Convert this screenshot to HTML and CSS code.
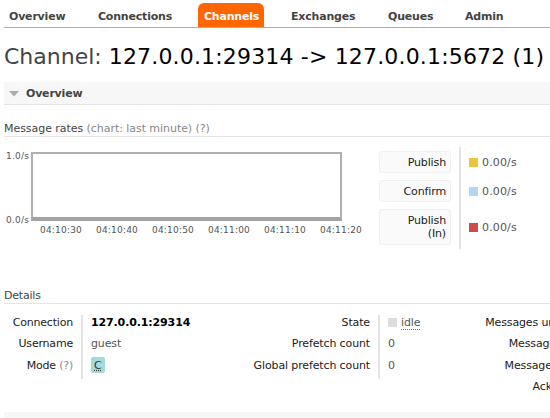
FILE: index.html
```
<!DOCTYPE html>
<html lang="en">
<head>
<meta charset="utf-8">
<title>Channel</title>
<link rel="stylesheet" href="styles.css">
</head>
<body>
<nav class="tabs">
  <a class="tab t1">Overview</a><a class="tab t2">Connections</a><a class="tab t3 selected">Channels</a><a class="tab t4">Exchanges</a><a class="tab t5">Queues</a><a class="tab t6">Admin</a>
</nav>
<main>
  <h1>Channel: <b>127.0.0.1:29314 -&gt; 127.0.0.1:5672 (1)</b></h1>
  <h2><svg width="10" height="6" viewBox="0 0 10 6"><path d="M0 0h10L5 5.5z" fill="#aaa"/></svg><span>Overview</span></h2>
  <h3 class="rates-title"><span>Message rates <i>(chart: last minute) (?)</i></span></h3>
  <section class="rates">
    <div class="chart">
      <div class="ylabels"><span>1.0/s</span><span>0.0/s</span></div>
      <div class="plot"></div>
      <div class="xlabels"><span>04:10:30</span><span>04:10:40</span><span>04:10:50</span><span>04:11:00</span><span>04:11:10</span><span>04:11:20</span></div>
    </div>
    <div class="legend">
      <div class="buttons"><div class="btn">Publish</div><div class="btn">Confirm</div><div class="btn tall">Publish<br>(In)</div></div>
      <div class="values">
        <div class="val"><span class="sw yellow"></span>0.00/s</div>
        <div class="val"><span class="sw blue"></span>0.00/s</div>
        <div class="val tall"><span class="sw red"></span>0.00/s</div>
      </div>
    </div>
  </section>
  <h3 class="details-title"><span>Details</span></h3>
  <section class="details">
    <div class="keys k1"><div>Connection</div><div>Username</div><div>Mode <i>(?)</i></div></div>
    <div class="facts f1"><div><b>127.0.0.1:29314</b></div><div>guest</div><div><abbr class="mode">C</abbr></div></div>
    <div class="keys k2"><div>State</div><div>Prefetch count</div><div>Global prefetch count</div></div>
    <div class="facts f2"><div><span class="sw grey"></span><abbr>idle</abbr></div><div>0</div><div>0</div></div>
    <div class="keys k3"><div>Messages unacknowledged</div><div>Messages unconfirmed</div><div>Messages uncommitted</div><div>Acks uncommitted</div></div>
  </section>
  <div class="next"></div>
</main>
</body>
</html>
```
FILE: styles.css
```
* { box-sizing: border-box; }
html, body { margin: 0; height: 418px; overflow: hidden; background: #fff; }
body { font: 11px/14px "DejaVu Sans", Verdana, sans-serif; color: #484848; padding-left: 4px; letter-spacing: -0.13px; }
i { font-style: normal; color: #888; }
.tabs { display: flex; height: 28px; padding-top: 3px; border-bottom: 1px solid #ffa030; font-weight: bold; white-space: nowrap; font-size: 11px; letter-spacing: -0.2px; }
.tab { height: 24px; line-height: 27px; padding-left: 5px; color: #444; }
.t1 { width: 89px; }
.t2 { width: 96px; margin-right: 9px; }
.t3 { width: 66px; padding-left: 6px; }
.t4 { width: 97px; margin-left: 22px; }
.t5 { width: 77px; }
.selected { background: #f60; color: #fff; border-radius: 6px 6px 0 0; }
main { display: block; }
h1 { margin: 0; height: 54px; font-size: 22px; line-height: 57px; font-weight: normal; color: #444; white-space: nowrap; letter-spacing: 0; }
h1 b { font-weight: normal; color: #000; letter-spacing: 0.17px; }
h2 { margin: 0; height: 23px; padding: 0 0 0 5px; display: flex; align-items: center; background: #f7f7f7; border-bottom: 1px solid #e4e4e4; font-size: 11px; letter-spacing: -0.2px; color: #444; }
h2 svg { margin-top: 1px; }
h2 span { margin-left: 7px; line-height: 16px; padding-top: 1px; }
h3 { margin: 0; font-size: 11px; font-weight: normal; line-height: 15px; border-bottom: 1px solid #e6e6e6; white-space: nowrap; color: #444; letter-spacing: -0.05px; }
.rates-title { height: 16px; margin-top: 16px; }
.rates { display: flex; height: 151px; }
.chart { display: grid; grid-template-columns: 27px 337px; grid-template-rows: 69px 20px; padding-top: 15px; width: 375px; font-size: 9px; line-height: 10px; color: #545454; letter-spacing: 0.2px; }
.ylabels { display: flex; flex-direction: column; justify-content: space-between; padding-left: 2px; margin: -1px 0 -4px; }
.plot { width: 311px; height: 69px; border: 2px solid #b0b0b0; border-bottom: 4px solid #a4a1a4; }
.xlabels { grid-column: 1 / 3; display: flex; gap: 13px; padding: 4px 0 0 36px; white-space: nowrap; }
.xlabels span { width: 43px; }
.legend { display: flex; padding-top: 10px; }
.buttons { width: 82px; height: 102px; border-right: 2px solid #e4e4e4; padding-top: 4px; }
.btn { width: 72px; height: 22px; margin-bottom: 7px; padding: 4px 4px 0 0; line-height: 13px; text-align: right; background: #fafafa; border: 1px solid #f0f0f0; border-radius: 3px; color: #222; }
.btn.tall { height: 36px; }
.values { padding: 4px 0 0 8px; color: #555; letter-spacing: 0.15px; }
.val { display: flex; align-items: center; height: 23px; margin-bottom: 6px; }
.val.tall { height: 37px; }
.sw { display: inline-block; width: 9px; height: 9px; margin-right: 4px; }
.yellow { background: #edc240; }
.blue { background: #afd8f8; }
.red { background: #cb4b4b; }
.grey { background: #ddd; vertical-align: -1px; }
.details-title { height: 16px; letter-spacing: -0.2px; }
.details { display: flex; height: 108px; padding-top: 11px; white-space: nowrap; }
.details > div { flex-shrink: 0; }
.keys { text-align: right; color: #222; }
.keys > div, .facts > div { height: 21.4px; line-height: 15px; }
.facts { height: 64px; color: #555; border-left: 2px solid #e4e4e4; padding-left: 8px; }
.facts b { color: #000; }
.k1 { width: 69px; margin-right: 8px; }
.k1 > div { letter-spacing: -0.2px; }
.f1 { width: 172px; }
.k2 { width: 117px; margin-right: 8px; }
.f2 { width: 98px; }
.k3 { width: 157px; }
.grey { margin-right: 4px; }
abbr { border-bottom: 1px dotted #777; }
.mode { display: inline-block; width: 14px; height: 16px; margin-top: -1px; padding: 1px 3px; background: #a3dada; border: 0; border-radius: 2px; text-decoration: underline dotted; color: #333; }
.next { height: 10px; background: #f7f7f7; }
```
